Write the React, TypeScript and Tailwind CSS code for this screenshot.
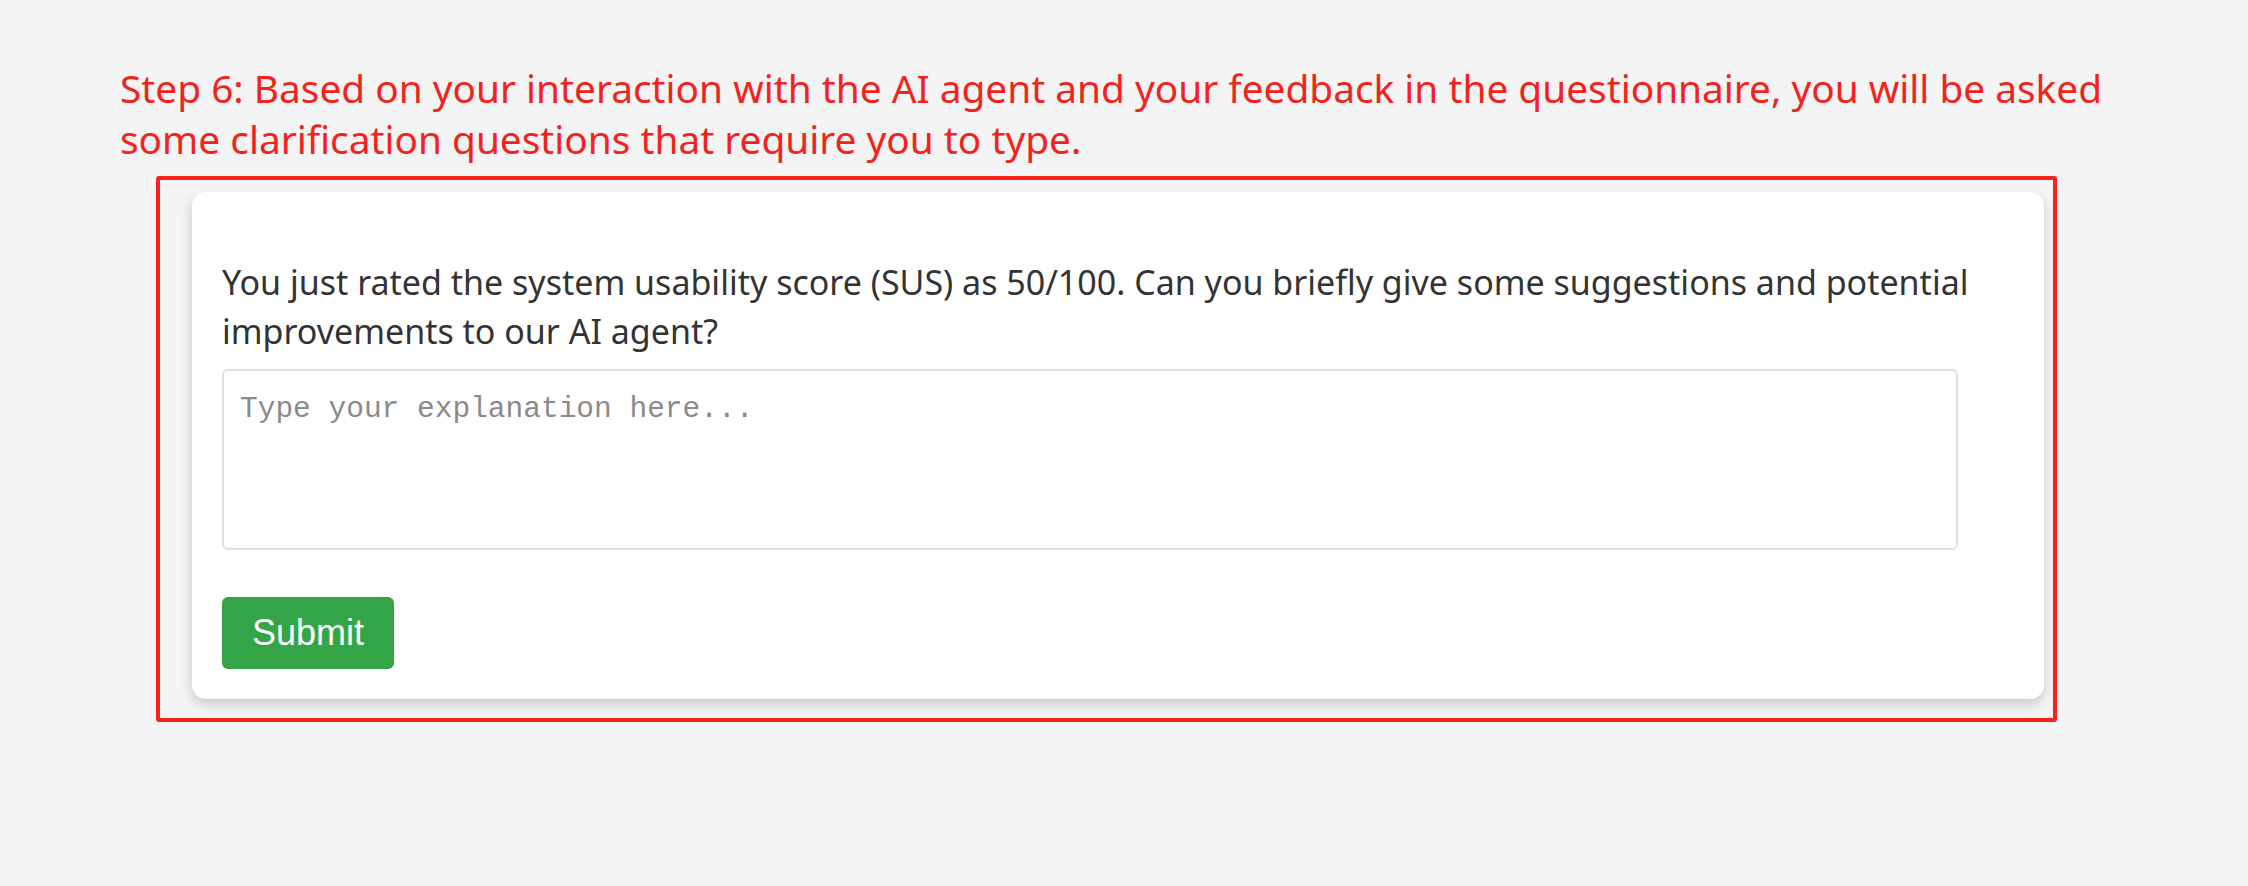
import React from "react";

const sans = { fontFamily: '"Noto Sans", "Open Sans", sans-serif' };

export default function App() {
  return (
    <div className="min-h-[886px] w-full bg-[#f4f4f4]">
      <div className="px-[120px] pt-[63px]">
        <h1 className="text-[38.8px] leading-[51px] text-[#f2231d] font-normal" style={sans}>
          Step 6: Based on your interaction with the AI agent and your feedback in the questionnaire, you will be asked some clarification questions that require you to type.
        </h1>
        <div className="mt-[11px] ml-[36px] w-[1901px] border-4 border-[#f5231c] rounded-[3px] pt-[12px] pl-[32px] pb-[19px] pr-[9px]">
          <div className="w-[1852px] rounded-[14px] bg-white shadow-[0_5px_12px_rgba(0,0,0,0.18)] px-[30px] pt-[66px] pb-[30px]">
            <p className="text-[34px] leading-[49px] text-[#333333]" style={sans}>
              You just rated the system usability score (SUS) as 50/100. Can you briefly give some suggestions and potential improvements to our AI agent?
            </p>
            <textarea
              className="mt-[13px] block w-[1736px] h-[181px] resize-none rounded-[6px] border-2 border-[#e0e0e0] bg-white px-[16px] py-[18px] text-[29.5px] leading-[40px] text-[#333] placeholder:text-[#8a8a8a] outline-none"
              style={{ fontFamily: '"Liberation Mono", monospace' }}
              placeholder="Type your explanation here..."
            />
            <button
              className="mt-[47px] block h-[72px] w-[172px] rounded-[6px] bg-[#33a547] text-[36px] text-white"
              style={{ fontFamily: '"Liberation Sans", Arial, sans-serif' }}
            >
              Submit
            </button>
          </div>
        </div>
      </div>
    </div>
  );
}
